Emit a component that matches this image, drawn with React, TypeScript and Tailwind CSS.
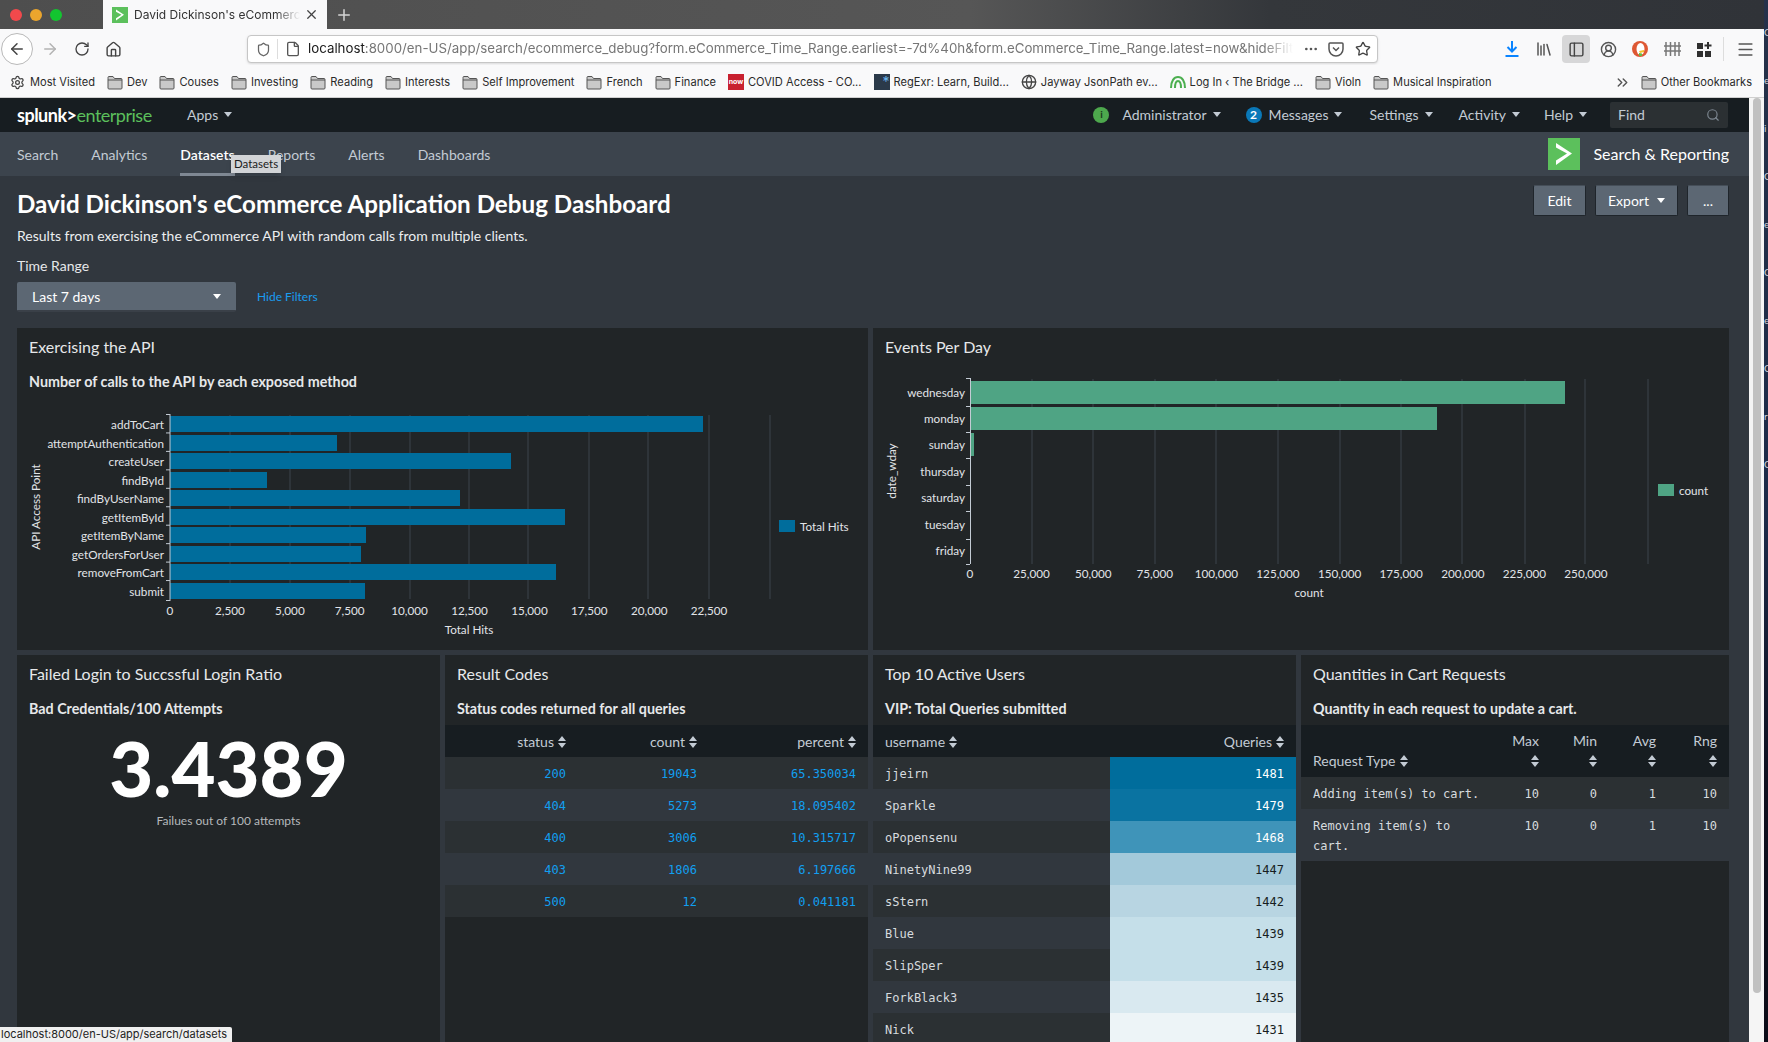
import { ArrowLeft, ArrowRight, RotateCw, House, File, Ellipsis, Star, Library, PanelLeft, CircleUserRound, Menu, Settings, X, Plus, Search, ChevronsRight, Shield, Globe } from 'lucide-react';

const sans = 'font-["Lato","Liberation_Sans",sans-serif]';

const bookmarks = ['Dev', 'Couses', 'Investing', 'Reading', 'Interests', 'Self Improvement', 'French', 'Finance'];
const navItems = ['Search', 'Analytics', 'Datasets', 'Reports', 'Alerts', 'Dashboards'];

const apiBars = [
  { name: 'addToCart', y: 416, end: 703 },
  { name: 'attemptAuthentication', y: 435, end: 337 },
  { name: 'createUser', y: 453, end: 511 },
  { name: 'findById', y: 472, end: 267 },
  { name: 'findByUserName', y: 490, end: 460 },
  { name: 'getItemById', y: 509, end: 565 },
  { name: 'getItemByName', y: 527, end: 366 },
  { name: 'getOrdersForUser', y: 546, end: 361 },
  { name: 'removeFromCart', y: 564, end: 556 },
  { name: 'submit', y: 583, end: 365 },
];
const apiTicks = ['0', '2,500', '5,000', '7,500', '10,000', '12,500', '15,000', '17,500', '20,000', '22,500'];
const apiGrid = [230, 290, 350, 410, 469, 528, 589, 648, 709, 770];

const dayLabels = [
  { name: 'wednesday', y: 393 },
  { name: 'monday', y: 419 },
  { name: 'sunday', y: 445 },
  { name: 'thursday', y: 472 },
  { name: 'saturday', y: 498 },
  { name: 'tuesday', y: 525 },
  { name: 'friday', y: 551 },
];
const dayTicks = [378, 406, 432, 458, 485, 511, 539, 564];
const dayGrid = [1032, 1093, 1155, 1216, 1278, 1340, 1401, 1462, 1525, 1585, 1648];
const dayLabelsX = ['0', '25,000', '50,000', '75,000', '100,000', '125,000', '150,000', '175,000', '200,000', '225,000', '250,000'];

const resultCodes = [
  ['200', '19043', '65.350034'],
  ['404', '5273', '18.095402'],
  ['400', '3006', '10.315717'],
  ['403', '1806', '6.197666'],
  ['500', '12', '0.041181'],
];

const users = [
  { name: 'jjeirn', q: 1481, bg: 'bg-[#006d9c]', fg: 'text-white' },
  { name: 'Sparkle', q: 1479, bg: 'bg-[#0a73a1]', fg: 'text-white' },
  { name: 'oPopensenu', q: 1468, bg: 'bg-[#3f94b9]', fg: 'text-white' },
  { name: 'NinetyNine99', q: 1447, bg: 'bg-[#a3c9da]', fg: 'text-[#171d21]' },
  { name: 'sStern', q: 1442, bg: 'bg-[#b8d5e2]', fg: 'text-[#171d21]' },
  { name: 'Blue', q: 1439, bg: 'bg-[#c5dfe9]', fg: 'text-[#171d21]' },
  { name: 'SlipSper', q: 1439, bg: 'bg-[#c5dfe9]', fg: 'text-[#171d21]' },
  { name: 'ForkBlack3', q: 1435, bg: 'bg-[#d9e9f0]', fg: 'text-[#171d21]' },
  { name: 'Nick', q: 1431, bg: 'bg-[#edf4f7]', fg: 'text-[#171d21]' },
];

function Folder() {
  return (
    <svg width="16" height="15" viewBox="0 0 16 15" className="shrink-0">
      <path d="M1 3.5V13a1 1 0 0 0 1 1h12a1 1 0 0 0 1-1V4.5a1 1 0 0 0-1-1H7.5L6 1.5H2a1 1 0 0 0-1 1z" fill="#c9c9c9" stroke="#555" strokeWidth="1" />
      <path d="M1 5h14" stroke="#555" strokeWidth="1" />
    </svg>
  );
}

function Caret({ className = '' }: { className?: string }) {
  return (
    <svg width="8" height="5" viewBox="0 0 8 5" className={className}>
      <path d="M0 0h8L4 5z" fill="currentColor" />
    </svg>
  );
}

function Sort() {
  return (
    <svg width="8" height="12" viewBox="0 0 8 12" className="inline-block ml-[4px] align-[-1px]">
      <path d="M4 0l4 5H0zM4 12L0 7h8z" fill="currentColor" />
    </svg>
  );
}

function Chevron({ size }: { size: number }) {
  return (
    <svg width={size} height={size} viewBox="0 0 32 32" className="shrink-0">
      <rect width="32" height="32" fill="#5cc05c" />
      <path d="M8 5l16 10.5L8 27v-4.5L19 15.5 8 9.5z" fill="#fff" />
    </svg>
  );
}

function Panel({ title, sub, className = '', children }: { title: string; sub?: string; className?: string; children?: React.ReactNode }) {
  return (
    <div className={`bg-[#212527] overflow-hidden ${className}`}>
      <h3 className="px-3 pt-[9px] text-[16px] leading-[20px] text-[#e6e8ea]">{title}</h3>
      {sub && <p className="px-3 mt-[15px] text-[14.3px] leading-[20px] font-bold text-[#e6e8ea] whitespace-nowrap">{sub}</p>}
      {children}
    </div>
  );
}

function ApiChart() {
  return (
    <svg width="851" height="258" viewBox="17 392 851 258" className="block" fontFamily="Lato, Liberation Sans, sans-serif" fontSize="11.7">
      {apiGrid.map(x => <line key={x} x1={x} x2={x} y1="415" y2="599" stroke="#3c444d" />)}
      {apiBars.map(b => <rect key={b.name} x="170" y={b.y} width={b.end - 170} height="16" fill="#006d9c" />)}
      <line x1="170" x2="170" y1="414" y2="601" stroke="#c3cbd4" />
      {apiBars.map((b, i) => <line key={i} x1="166" x2="170" y1={414.5 + i * 18.45} y2={414.5 + i * 18.45} stroke="#c3cbd4" />)}
      <line x1="166" x2="170" y1="600.5" y2="600.5" stroke="#c3cbd4" />
      {apiBars.map(b => <text key={b.name} x="164" y={b.y + 13} textAnchor="end" fill="#e1e4e7">{b.name}</text>)}
      {apiTicks.map((t, i) => <text key={t} x={170 + i * 59.9} y="615" textAnchor="middle" fill="#e1e4e7">{t}</text>)}
      <text x="469" y="634" textAnchor="middle" fill="#e1e4e7">Total Hits</text>
      <text transform="translate(40 507) rotate(-90)" textAnchor="middle" fill="#e1e4e7">API Access Point</text>
      <rect x="779" y="520" width="16" height="12" fill="#006d9c" />
      <text x="800" y="531" fill="#e1e4e7">Total Hits</text>
    </svg>
  );
}

function DayChart() {
  return (
    <svg width="856" height="292" viewBox="873 358 856 292" className="block mt-[1px]" fontFamily="Lato, Liberation Sans, sans-serif" fontSize="11.7">
      {dayGrid.map(x => <line key={x} x1={x} x2={x} y1="379" y2="564" stroke="#3c444d" />)}
      <rect x="970" y="381" width="595" height="23" fill="#4fa484" />
      <rect x="970" y="407" width="467" height="23" fill="#4fa484" />
      <rect x="970" y="433" width="4" height="23" fill="#4fa484" />
      <line x1="970.5" x2="970.5" y1="378" y2="564" stroke="#c3cbd4" />
      {dayTicks.map(y => <line key={y} x1="966" x2="970" y1={y + 0.5} y2={y + 0.5} stroke="#c3cbd4" />)}
      {dayLabels.map(d => <text key={d.name} x="965" y={d.y + 4} textAnchor="end" fill="#e1e4e7">{d.name}</text>)}
      {dayLabelsX.map((t, i) => <text key={t} x={970 + i * 61.6} y="578" textAnchor="middle" fill="#e1e4e7">{t}</text>)}
      <text x="1309" y="597" textAnchor="middle" fill="#e1e4e7">count</text>
      <text transform="translate(896 471) rotate(-90)" textAnchor="middle" fill="#e1e4e7">date_wday</text>
      <rect x="1658" y="484" width="16" height="12" fill="#4fa484" />
      <text x="1679" y="495" fill="#e1e4e7">count</text>
    </svg>
  );
}

function ResultTable() {
  return (
    <table className="w-full table-fixed border-collapse mt-[6px]">
      <thead>
        <tr className="bg-[#171d21] text-[14px] text-[#c3cbd4] h-[32px]">
          <th className="w-[133px] pr-3 text-right font-normal">status<Sort /></th>
          <th className="w-[131px] pr-3 text-right font-normal">count<Sort /></th>
          <th className="pr-3 text-right font-normal">percent<Sort /></th>
        </tr>
      </thead>
      <tbody className='font-["DejaVu_Sans_Mono",monospace] text-[12px] text-[#119ff0]'>
        {resultCodes.map((r, i) => (
          <tr key={r[0]} className={`h-[32px] ${i % 2 ? 'bg-[#31373e]' : 'bg-[#2b3033]'}`}>
            {r.map(c => <td key={c} className="pr-3 pt-[2px] text-right">{c}</td>)}
          </tr>
        ))}
      </tbody>
    </table>
  );
}

function UsersTable() {
  return (
    <table className="w-full table-fixed border-collapse mt-[6px]">
      <thead>
        <tr className="bg-[#171d21] text-[14px] text-[#c3cbd4] h-[32px]">
          <th className="w-[237px] pl-3 text-left font-normal">username<Sort /></th>
          <th className="pr-3 text-right font-normal">Queries<Sort /></th>
        </tr>
      </thead>
      <tbody className='font-["DejaVu_Sans_Mono",monospace] text-[12px]'>
        {users.map((u, i) => (
          <tr key={u.name} className={`h-[32px] ${i % 2 ? 'bg-[#31373e]' : 'bg-[#2b3033]'}`}>
            <td className="pl-3 pt-[2px] text-[#d7dbdf]">{u.name}</td>
            <td className={`pr-3 pt-[2px] text-right ${u.bg} ${u.fg}`}>{u.q}</td>
          </tr>
        ))}
      </tbody>
    </table>
  );
}

function CartTable() {
  const rows = [['Adding item(s) to cart.', '10', '0', '1', '10'], ['Removing item(s) to cart.', '10', '0', '1', '10']];
  return (
    <table className="w-full table-fixed border-collapse mt-[6px]">
      <thead>
        <tr className="bg-[#171d21] text-[14px] text-[#c3cbd4] h-[52px]">
          <th className="w-[200px] pl-3 pt-[20px] text-left font-normal leading-[20px]">Request Type<Sort /></th>
          {[['Max', 'w-[50px]'], ['Min', 'w-[58px]'], ['Avg', 'w-[59px]'], ['Rng', '']].map(([h, w]) => (
            <th key={h} className={`${w} pr-3 text-right font-normal leading-[20px]`}>
              {h}
              <div className="h-[20px] flex items-center justify-end"><Sort /></div>
            </th>
          ))}
        </tr>
      </thead>
      <tbody className='font-["DejaVu_Sans_Mono",monospace] text-[12px] text-[#d7dbdf] leading-[20px]'>
        {rows.map((r, i) => (
          <tr key={r[0]} className={i % 2 ? 'bg-[#31373e]' : 'bg-[#2b3033]'}>
            {r.map((c, j) => (
              <td key={j} className={`pt-[7px] pb-[5px] align-top ${j === 0 ? 'pl-3 pr-[16px]' : 'pr-3 text-right'}`}>{c}</td>
            ))}
          </tr>
        ))}
      </tbody>
    </table>
  );
}

export default function App() {
  return (
    <div className={`w-[1768px] h-[1042px] overflow-hidden flex relative bg-[#101322] ${sans}`}>
      <div className="w-[1764px] flex flex-col">
        {/* tab strip */}
        <div className="h-[29px] flex items-stretch bg-[linear-gradient(90deg,#4e4e4e_0%,#565656_55%,#34373b_72%,#303338_100%)]">
          <div className="w-[103px] flex items-center gap-[8px] pl-[10px]">
            <span className="w-[12px] h-[12px] rounded-full bg-[#f2494c]" />
            <span className="w-[12px] h-[12px] rounded-full bg-[#eba52d]" />
            <span className="w-[12px] h-[12px] rounded-full bg-[#13c530]" />
          </div>
          <div className="w-[224px] bg-[#f9f9fa] flex items-center pl-[9px] pr-[8px]">
            <Chevron size={16} />
            <span className="ml-[6px] flex-1 overflow-hidden whitespace-nowrap text-[12px] text-[#333] font-['Inter',sans-serif] [mask-image:linear-gradient(90deg,#000_85%,transparent_100%)]">David Dickinson's eCommerce Application</span>
            <X size={15} className="ml-[4px] text-[#444]" />
          </div>
          <div className="w-[34px] flex items-center justify-center"><Plus size={18} className="text-[#d5d5d5]" /></div>
        </div>

        {/* toolbar */}
        <div className="h-[36px] bg-[#f9f9fa] flex items-center pt-[4px] font-['Inter',sans-serif]">
          <div className="ml-[1px] w-[32px] h-[32px] rounded-full border border-[#b9b9b9] bg-white flex items-center justify-center"><ArrowLeft size={18} className="text-[#444]" /></div>
          <div className="w-[34px] flex justify-center"><ArrowRight size={18} className="text-[#b3b3b3]" /></div>
          <div className="w-[30px] flex justify-center"><RotateCw size={16} className="text-[#444]" /></div>
          <div className="w-[32px] flex justify-center"><House size={17} className="text-[#444]" /></div>
          <div className="ml-[118px] w-[1131px] h-[28px] bg-white border border-[#c6c6c6] rounded-[4px] flex items-center pl-[8px] pr-[6px] shadow-sm">
            <Shield size={15} className="text-[#666] shrink-0" />
            <span className="w-px h-[20px] bg-[#ddd] mx-[6px] shrink-0" />
            <File size={16} className="text-[#555] shrink-0 ml-[1px]" />
            <span className="ml-[7px] flex-1 overflow-hidden whitespace-nowrap text-[13.3px] text-[#767676] [mask-image:linear-gradient(90deg,#000_97%,transparent_100%)]">
              <span className="text-[#1a1a1a]">localhost</span>:8000/en-US/app/search/ecommerce_debug?form.eCommerce_Time_Range.earliest=-7d%40h&amp;form.eCommerce_Time_Range.latest=now&amp;hideFilters=true
            </span>
            <Ellipsis size={16} className="ml-[10px] text-[#555] shrink-0" />
            <svg width="16" height="15" viewBox="0 0 16 15" className="ml-[9px] shrink-0">
              <path d="M2 1h12a1 1 0 0 1 1 1v5a7 7 0 0 1-14 0V2a1 1 0 0 1 1-1z" fill="none" stroke="#555" strokeWidth="1.500" />
              <path d="M5 5.500l3 3 3-3" fill="none" stroke="#555" strokeWidth="1.500" />
            </svg>
            <Star size={16} className="ml-[11px] text-[#444] shrink-0" />
          </div>
          <div className="ml-[118px] flex items-center">
            <div className="w-[32px] flex justify-center">
              <svg width="16" height="18" viewBox="0 0 16 18"><path d="M8 1v10M3.500 7L8 11.500 12.500 7M1.500 16h13" stroke="#0a84ff" strokeWidth="2" fill="none" /></svg>
            </div>
            <div className="w-[32px] flex justify-center"><Library size={18} className="text-[#555]" /></div>
            <div className="w-[28px] mx-[2px] h-[28px] rounded-[4px] bg-[#d7d7d8] flex items-center justify-center"><PanelLeft size={17} className="text-[#444]" /></div>
            <div className="w-[32px] flex justify-center"><CircleUserRound size={17} className="text-[#555]" /></div>
            <div className="w-[32px] flex justify-center">
              <svg width="16" height="16" viewBox="0 0 16 16"><circle cx="8" cy="8" r="8" fill="#de5833" /><ellipse cx="8.500" cy="8" rx="4" ry="6" fill="#fff" /><path d="M7 10l5-1v2l-4 1z" fill="#f5c32c" /><path d="M7 12l3 .5V15H7z" fill="#65bc46" /></svg>
            </div>
            <div className="w-[32px] flex justify-center">
              <svg width="17" height="16" viewBox="0 0 17 16"><path d="M2 1v14M6.500 1v14M11 1v14M15 1v14M0 5h17M0 10h17" stroke="#777" strokeWidth="1.500" /></svg>
            </div>
            <div className="w-[32px] flex justify-center">
              <svg width="15" height="15" viewBox="0 0 15 15"><path d="M0 1h6v6H0zM0 9h6v6H0zM8 9h6v6H8zM10 0h2v2.500h2.500v2H12V7h-2V4.500H7.500v-2H10z" fill="#2f2f2f" /></svg>
            </div>
            <span className="w-px h-[24px] bg-[#ddd] ml-[3px]" />
            <Menu size={19} className="ml-[12px] text-[#555]" />
          </div>
        </div>

        {/* bookmarks */}
        <div className="h-[33px] bg-[#f9f9fa] border-b border-[#cfcfcf] flex items-center pt-[3px] pl-[10px] pr-[12px] text-[11.1px] text-[#2a2a2a] font-['Inter',sans-serif] whitespace-nowrap">
          <Settings size={15} className="text-[#444] mr-[5px]" />
          <span>Most Visited</span>
          {bookmarks.map(b => (
            <span key={b} className="flex items-center gap-[4px] ml-[12px]"><Folder />{b}</span>
          ))}
          <span className="flex items-center gap-[4px] ml-[12px]">
            <span className="w-[16px] h-[16px] bg-[#c8202f] text-white text-[7px] font-bold flex items-center justify-center">now</span>COVID Access - CO...
          </span>
          <span className="flex items-center gap-[4px] ml-[12px]">
            <span className="w-[16px] h-[16px] bg-[#2b3a4a] text-[#6bb5ee] text-[14px] leading-[16px] text-right">*</span>RegExr: Learn, Build...
          </span>
          <span className="flex items-center gap-[4px] ml-[12px]"><Globe size={16} className="text-[#444]" />Jayway JsonPath ev...</span>
          <span className="flex items-center gap-[4px] ml-[12px]">
            <svg width="16" height="12" viewBox="0 0 16 12"><path d="M1 12C1 5 4 1 8 1s7 4 7 11M5 12c0-4 1-7 3-7s3 3 3 7" stroke="#4caf50" strokeWidth="2" fill="none" /></svg>
            Log In ‹ The Bridge ...
          </span>
          <span className="flex items-center gap-[4px] ml-[12px]"><Folder />Violn</span>
          <span className="flex items-center gap-[4px] ml-[12px]"><Folder />Musical Inspiration</span>
          <ChevronsRight size={17} className="ml-auto text-[#555]" />
          <span className="flex items-center gap-[4px] ml-[10px]"><Folder />Other Bookmarks</span>
        </div>

        <div className="flex-1 min-h-0 flex">
          {/* splunk page */}
          <div className="w-[1749px] flex flex-col bg-[#31373e] overflow-hidden">
            <div className="h-[34px] shrink-0 bg-[#171d21] flex items-center pb-[1px] text-[14px] text-[#c3cbd4]">
              <span className="ml-[17px] w-[170px] text-[18px] font-bold tracking-[-0.5px] leading-none">
                <span className="text-white">splunk&gt;</span><span className="text-[#5cc05c] font-normal">enterprise</span>
              </span>
              <span className="flex items-center gap-[6px]">Apps<Caret /></span>
              <span className="ml-auto w-[16px] h-[16px] rounded-full bg-[#4da84d] text-[#1a3a1a] text-[10px] flex items-center justify-center font-bold">i</span>
              <span className="ml-[13px] flex items-center gap-[6px]">Administrator<Caret /></span>
              <span className="ml-[25px] w-[16px] h-[16px] rounded-full bg-[#0a78b8] text-white text-[12px] font-bold flex items-center justify-center">2</span>
              <span className="ml-[7px] flex items-center gap-[6px]">Messages<Caret /></span>
              <span className="ml-[27px] flex items-center gap-[6px]">Settings<Caret /></span>
              <span className="ml-[26px] flex items-center gap-[6px]">Activity<Caret /></span>
              <span className="ml-[24px] flex items-center gap-[6px]">Help<Caret /></span>
              <div className="ml-[23px] mr-[21px] w-[118px] h-[26px] rounded-[2px] bg-[#2b3033] flex items-center justify-between px-[8px]">
                <span>Find</span>
                <Search size={14} className="text-[#7d8791]" />
              </div>
            </div>

            <div className="h-[44px] shrink-0 bg-[#3c444d] flex items-center px-[17px] text-[14px] text-[#c3cbd4] relative">
              {navItems.map(n => (
                <span key={n} className={`mr-[33px] h-full flex items-center border-b-[3px] pt-[3px] ${n === 'Datasets' ? 'border-[#7f8893] text-white font-semibold' : 'border-transparent'}`}>{n}</span>
              ))}
              <span className="absolute left-[231px] top-[23px] h-[18px] px-[3px] bg-[#d2d4d7] text-[#1c1c1c] text-[11.5px] leading-[18px] shadow-md">Datasets</span>
              <span className="ml-auto mr-[3px] flex items-center gap-[13px] text-white text-[16px]"><Chevron size={32} />Search &amp; Reporting</span>
            </div>

            <div className="flex-1 min-h-0 flex flex-col px-[17px] pr-[20px]">
              <div className="flex justify-between pt-[9px] h-[54px] shrink-0">
                <h1 className="mt-[1px] text-[24.2px] leading-[36px] font-bold text-white">David Dickinson's eCommerce Application Debug Dashboard</h1>
                <div className="flex gap-[9px] text-[14px] text-white">
                  {['Edit', 'Export', '...'].map(b => (
                    <button key={b} className={`h-[31px] rounded-[2px] bg-[#5c6773] border border-[#1f252b] border-t-[#454e58] flex items-center justify-center gap-[8px] ${b === 'Edit' ? 'w-[53px]' : b === 'Export' ? 'w-[83px]' : 'w-[42px]'}`}>
                      {b}{b === 'Export' && <Caret />}
                    </button>
                  ))}
                </div>
              </div>
              <p className="text-[14px] leading-[20px] text-[#eceef0] -mt-[4px]">Results from exercising the eCommerce API with random calls from multiple clients.</p>
              <label className="mt-[10px] text-[14px] leading-[20px] text-[#e6e8ea]">Time Range</label>
              <div className="mt-[6px] flex items-center gap-[21px] shrink-0">
                <div className="w-[219px] h-[30px] rounded-[2px] bg-[#5c6773] border-b-2 border-[#3a4048] flex items-center justify-between pl-[15px] pr-[15px] text-[14px] text-white">
                  Last 7 days<Caret />
                </div>
                <span className="text-[12px] text-[#1a9cf0]">Hide Filters</span>
              </div>

              <div className="mt-[16px] grid grid-cols-[851px_856px] gap-x-[5px] shrink-0 h-[322px]">
                <Panel title="Exercising the API" sub="Number of calls to the API by each exposed method">
                  <ApiChart />
                </Panel>
                <Panel title="Events Per Day"><DayChart /></Panel>
              </div>

              <div className="mt-[5px] flex-1 min-h-0 grid grid-cols-[423px_423px_423px_428px] gap-x-[5px]">
                <Panel title="Failed Login to Succssful Login Ratio" sub="Bad Credentials/100 Attempts">
                  <div className="mt-[13px] text-center text-[76px] leading-[72px] font-black text-white">3.4389</div>
                  <div className="mt-[8px] text-center text-[12px] leading-[18px] text-[#b5b9bc]">Failues out of 100 attempts</div>
                </Panel>
                <Panel title="Result Codes" sub="Status codes returned for all queries"><ResultTable /></Panel>
                <Panel title="Top 10 Active Users" sub="VIP: Total Queries submitted"><UsersTable /></Panel>
                <Panel title="Quantities in Cart Requests" sub="Quantity in each request to update a cart."><CartTable /></Panel>
              </div>
            </div>
          </div>

          {/* page scrollbar */}
          <div className="w-[15px] bg-[#f5f5f5] pl-[4px]">
            <div className="w-[8px] h-[895px] rounded-full bg-[#c1c1c1]" />
          </div>
        </div>
      </div>

      {/* desktop peeking out on the right */}
      <div className="w-[4px] bg-[linear-gradient(180deg,#26324a_0%,#1c2a48_50%,#0e0f1e_75%,#0b0c18_100%)] flex flex-col gap-[36px] pt-[26px] text-[10px] leading-[12px] text-[#cfd3da] overflow-hidden">
        {['C', 'e', 'i', 'C', 'e', 'C', 'e', 'C', 'r', 'C'].map((c, i) => <span key={i}>{c}</span>)}
      </div>

      <div className="absolute left-0 bottom-0 h-[15px] w-[232px] bg-[#f0f0f0] rounded-tr-[2px] text-[11px] leading-[15px] pl-[1px] text-[#222] font-['Inter',sans-serif] whitespace-nowrap overflow-hidden">localhost:8000/en-US/app/search/datasets</div>
    </div>
  );
}
